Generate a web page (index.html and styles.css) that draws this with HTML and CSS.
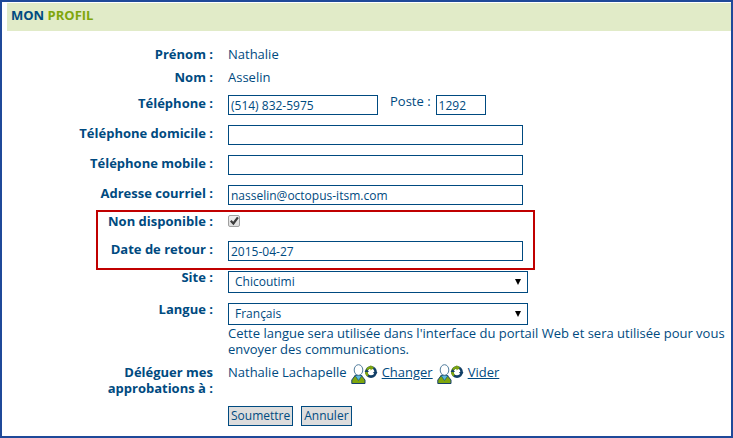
FILE: index.html
```html
<!DOCTYPE html>
<html lang="fr">
<head>
<meta charset="utf-8">
<title>Mon profil</title>
<link rel="stylesheet" href="styles.css">
</head>
<body>
<svg class="defs" aria-hidden="true">
  <symbol id="swap-user" viewBox="0 0 27 20">
    <path d="M.8 19.500V16L4.500 11h5.500l4 5v3.500z" fill="#7fa60c" stroke="#17406b"/>
    <path d="M4 11.500h7l-3.500 5z" fill="#5bb8dc" stroke="#17567f" stroke-width=".7"/>
    <ellipse cx="7.500" cy="6" rx="4.300" ry="5.300" fill="#fff" stroke="#507c9c"/>
    <circle cx="20" cy="8" r="4.600" fill="none" stroke="#123f66" stroke-width="2.600"/>
    <path d="M20 3.400A4.600 4.600 0 0 0 17 11.500" fill="none" stroke="#7fa60c" stroke-width="2.400"/>
    <path d="M19.500 1l3.500 2.800-3.500 2.800z" fill="#7fa60c"/>
    <path d="M22 8h4.500l-2.300 3.500zM13.500 8l2.200-3 2.300 3z" fill="#123f66"/>
  </symbol>
</svg>
<main class="profile">
  <h1 class="title">MON <span class="accent">PROFIL</span></h1>
  <form class="form">
    <div class="row"><span class="label">Prénom :</span><span>Nathalie</span></div>
    <div class="row"><span class="label">Nom :</span><span>Asselin</span></div>
    <div class="fields">
      <div class="row">
        <label class="label" for="phone">Téléphone :</label>
        <div class="phone">
          <input class="text medium" id="phone" type="text" value="(514) 832-5975">
          <label class="ext-label" for="ext">Poste :</label>
          <input class="text short" id="ext" type="text" value="1292">
        </div>
      </div>
      <div class="row"><label class="label" for="home">Téléphone domicile :</label><input class="text" id="home" type="text"></div>
      <div class="row"><label class="label" for="mobile">Téléphone mobile :</label><input class="text" id="mobile" type="text"></div>
      <div class="row"><label class="label" for="mail">Adresse courriel :</label><input class="text" id="mail" type="text" value="nasselin@octopus-itsm.com"></div>
      <div class="highlight">
        <div class="row check-row"><label class="label" for="away">Non disponible :</label><input class="check" id="away" type="checkbox" checked></div>
        <div class="row"><label class="label" for="back">Date de retour :</label><input class="text" id="back" type="text" value="2015-04-27"></div>
      </div>
      <div class="row select-row">
        <label class="label" for="site">Site :</label>
        <div class="select"><select id="site"><option>Chicoutimi</option></select></div>
      </div>
      <div class="row select-row">
        <label class="label" for="lang">Langue :</label>
        <div>
          <div class="select"><select id="lang"><option>Français</option></select></div>
          <p class="help">Cette langue sera utilisée dans l'interface du portail Web et sera utilisée pour vous envoyer des communications.</p>
        </div>
      </div>
      <div class="row">
        <span class="label">Déléguer mes approbations à :</span>
        <div class="delegate">
          <span>Nathalie Lachapelle</span>
          <svg class="icon" aria-hidden="true"><use href="#swap-user"/></svg>
          <a href="#">Changer</a>
          <svg class="icon" aria-hidden="true"><use href="#swap-user"/></svg>
          <a href="#">Vider</a>
        </div>
      </div>
      <div class="row actions">
        <div class="buttons"><button type="submit">Soumettre</button><button type="button">Annuler</button></div>
      </div>
    </div>
  </form>
</main>
</body>
</html>
```
FILE: styles.css
```css
* { box-sizing: border-box; }

body {
  margin: 0;
  background: #fff;
  color: #004a80;
  font: 13px/16px "Trebuchet MS", "Open Sans", sans-serif;
}

.defs { position: absolute; width: 0; height: 0; }

.profile {
  min-height: 100vh;
  padding: 1px 0 0 5px;
  border: 2px solid #1f4999;
}

.title {
  margin: 0;
  padding: 4px 4px 8px;
  background: #e1ebc8;
  font-size: 13px;
  line-height: 16px;
}

.accent { color: #7fa60c; }

.form { padding-top: 12px; }
.fields { padding-top: 3px; }

.row {
  display: grid;
  grid-template-columns: 206px minmax(0, 1fr);
  column-gap: 15px;
  align-items: start;
  padding: 3px 0 4px;
}

.label {
  padding-left: 90px;
  margin-left: -20px;
  font-weight: bold;
  text-align: right;
}

label.label { padding-left: 0; }

.text, select, button {
  border: 1px solid #004a80;
  border-radius: 0;
  background: #fff;
  color: inherit;
  font: 12px/16px "Trebuchet MS", "Open Sans", sans-serif;
}

.text {
  width: 295px;
  height: 20px;
  margin: 0 0 3px;
  padding: 0 2px;
}

.medium { width: 150px; }
.short { width: 50px; }

.phone { display: flex; }
.ext-label { margin: -2px 5px 0 12px; }

.highlight { position: relative; }

.highlight::before {
  content: "";
  position: absolute;
  top: -2px;
  bottom: -2px;
  left: 89px;
  width: 435px;
  border: 2px solid #c00000;
  pointer-events: none;
}

.check-row { padding-top: 1px; }

.check {
  appearance: none;
  width: 12px;
  height: 12px;
  margin: 2px 0 7px;
  border: 1px solid #a0a0a0;
  border-radius: 2px;
  background: linear-gradient(#eee, #ddd);
}

.check:checked::before {
  content: "";
  display: block;
  height: 10px;
  background: #3c3c3c;
  clip-path: polygon(10% 55%, 25% 40%, 42% 57%, 80% 8%, 98% 20%, 45% 92%);
}

.select-row { padding-top: 1px; }

.select {
  position: relative;
  width: 300px;
  margin: 2px 0 3px;
}

.select::after {
  content: "";
  position: absolute;
  top: 8px;
  right: 7px;
  width: 6px;
  height: 6px;
  background: #000;
  clip-path: polygon(0 0, 100% 0, 50% 100%);
  pointer-events: none;
}

select {
  display: block;
  appearance: none;
  width: 100%;
  height: 22px;
  padding: 0 6px;
}

.help { margin: -3px 0 0; }

.delegate { display: flex; align-items: flex-start; gap: 4px; }
.icon { width: 27px; height: 20px; }
a { color: inherit; }

.actions { padding-top: 6px; }
.buttons { grid-column: 2; display: flex; gap: 8px; }

button {
  height: 20px;
  padding: 0 2px;
  background: #ddd;
}
```
